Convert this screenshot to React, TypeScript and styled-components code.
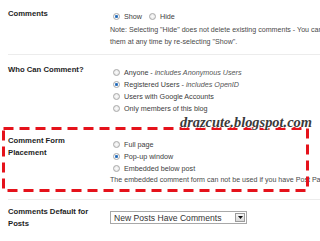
import React from "react";
import styled, { createGlobalStyle } from "styled-components";

const Global = createGlobalStyle`
  html, body { margin: 0; padding: 0; background: #ffffff; }
  body { font-family: "Liberation Sans", Arial, sans-serif; }
`;

const Page = styled.div`
  position: relative;
  width: 320px;
  height: 241px;
  overflow: hidden;
  padding-top: 8px;
  box-sizing: border-box;
  background: #fff;
`;

const Row = styled.div<{ $inset?: number; $top?: number; $bottom?: number }>`
  display: grid;
  grid-template-columns: 102px 1fr;
  padding-left: ${(p) => p.$inset ?? 8}px;
  padding-top: ${(p) => p.$top ?? 0}px;
  padding-bottom: ${(p) => p.$bottom ?? 0}px;
`;

const Label = styled.div`
  font-family: "Liberation Sans", Arial, sans-serif;
  font-weight: bold;
  font-size: 7.7px;
  line-height: 11.5px;
  color: #1e1e1e;
  white-space: nowrap;
`;

const Content = styled.div<{ $offset?: number }>`
  padding-top: ${(p) => p.$offset ?? 2}px;
  display: flex;
  flex-direction: column;
  min-width: 0;
`;

const Options = styled.div<{ $inline?: boolean }>`
  display: flex;
  flex-direction: ${(p) => (p.$inline ? "row" : "column")};
  gap: ${(p) => (p.$inline ? "4px" : "0")};
`;

const Option = styled.div`
  display: flex;
  align-items: center;
  gap: 4px;
  height: 12px;
  padding-left: 3px;
  font-family: "Liberation Sans", Arial, sans-serif;
  font-size: 7.2px;
  color: #3c3c3c;
  white-space: nowrap;
`;

const Radio = styled.span<{ $checked?: boolean }>`
  width: 7px;
  height: 7px;
  box-sizing: border-box;
  border-radius: 50%;
  border: 1px solid #a9a9a9;
  background: ${(p) =>
    p.$checked
      ? "radial-gradient(circle, #1f5fa8 0, #3b7fc9 1.3px, #ffffff 1.9px, #e6e6e6 100%)"
      : "radial-gradient(circle, #fbfbfb 0, #e9e9e9 70%, #d4d4d4 100%)"};
  flex: none;
`;

const Em = styled.i`
  font-style: italic;
  color: #555;
`;

const Note = styled.div<{ $gap?: number }>`
  margin-top: ${(p) => p.$gap ?? 0}px;
  font-family: "Liberation Sans", Arial, sans-serif;
  font-size: 7.1px;
  line-height: 12px;
  color: #4a4a4a;
  white-space: nowrap;
`;

const Separator = styled.div<{ $before: number }>`
  margin-top: ${(p) => p.$before}px;
  margin-left: 8px;
  height: 1px;
  background: #ececec;
`;

const Highlight = styled.div<{ $before: number }>`
  position: relative;
  margin: ${(p) => p.$before}px 11px 0 2px;
  height: 65px;
  box-sizing: border-box;
`;

const Dashes = styled.svg`
  position: absolute;
  inset: 0;
  width: 100%;
  height: 100%;
  pointer-events: none;
`;

const Select = styled.div`
  width: 137px;
  height: 13px;
  box-sizing: border-box;
  border: 1px solid #a8a8a8;
  background: #fff;
  display: flex;
  align-items: center;
  justify-content: space-between;
  padding: 0 1px 0 3px;
  font-family: "Liberation Sans", Arial, sans-serif;
  font-size: 8.6px;
  color: #333;
  white-space: nowrap;
`;

const SelectButton = styled.span`
  width: 10px;
  height: 9px;
  box-sizing: border-box;
  border: 1px solid #9c9c9c;
  background: linear-gradient(#f6f6f6, #d9d9d9);
  display: flex;
  align-items: center;
  justify-content: center;
`;

const Watermark = styled.div`
  position: absolute;
  left: 180px;
  top: 114px;
  font-family: "Liberation Serif", "Times New Roman", serif;
  font-style: italic;
  font-weight: bold;
  font-size: 14.4px;
  line-height: 16px;
  color: #3a3a3a;
  text-shadow: 0 0 1px #fff, 1px 1px 0 #fff, -1px -1px 0 #fff;
  white-space: nowrap;
`;

type Opt = { label: React.ReactNode; checked?: boolean };

const RadioGroup: React.FC<{ items: Opt[]; inline?: boolean }> = ({ items, inline }) => (
  <Options $inline={inline}>
    {items.map((it, i) => (
      <Option key={i}>
        <Radio $checked={it.checked} />
        <span>{it.label}</span>
      </Option>
    ))}
  </Options>
);

export default function App() {
  return (
    <>
      <Global />
      <Page>
        <Row>
          <Label>Comments</Label>
          <Content $offset={2}>
            <RadioGroup
              inline
              items={[{ label: "Show", checked: true }, { label: "Hide" }]}
            />
            <Note $gap={2}>
              Note: Selecting "Hide" does not delete existing comments - You can show
              <br />
              them at any time by re-selecting "Show".
            </Note>
          </Content>
        </Row>
        <Separator $before={6} />
        <Row $top={9}>
          <Label>Who Can Comment?</Label>
          <Content $offset={2}>
            <RadioGroup
              items={[
                { label: <>Anyone - <Em>includes Anonymous Users</Em></> },
                { label: <>Registered Users - <Em>includes OpenID</Em></>, checked: true },
                { label: "Users with Google Accounts" },
                { label: "Only members of this blog" },
              ]}
            />
          </Content>
        </Row>
        <Highlight $before={13}>
          <Dashes viewBox="0 0 307 65" preserveAspectRatio="none">
            <rect
              x="1.5"
              y="1.5"
              width="304"
              height="62"
              fill="none"
              stroke="#e5121b"
              strokeWidth="3"
              strokeDasharray="10 6"
            />
          </Dashes>
          <Row $inset={6} $top={8}>
            <Label>
              Comment Form
              <br />
              Placement
            </Label>
            <Content $offset={3}>
              <RadioGroup
                items={[
                  { label: "Full page" },
                  { label: "Pop-up window", checked: true },
                  { label: "Embedded below post" },
                ]}
              />
              <Note>
                The embedded comment form can not be used if you have Post Pages disabled.
              </Note>
            </Content>
          </Row>
        </Highlight>
        <Separator $before={7} />
        <Row $top={6}>
          <Label>
            Comments Default for
            <br />
            Posts
          </Label>
          <Content $offset={5}>
            <Select>
              <span>New Posts Have Comments</span>
              <SelectButton>
                <svg width="5" height="3" viewBox="0 0 5 3">
                  <path d="M0 0h5L2.5 3z" fill="#111" />
                </svg>
              </SelectButton>
            </Select>
          </Content>
        </Row>
        <Watermark>drazcute.blogspot.com</Watermark>
      </Page>
    </>
  );
}
